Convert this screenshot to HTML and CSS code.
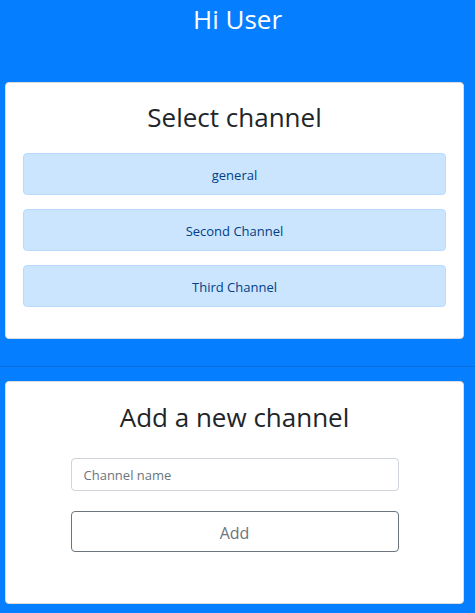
FILE: index.html
```html
<!DOCTYPE html>
<html>
<head>
<meta charset="utf-8">
<link rel="stylesheet" href="styles.css">
</head>
<body>
<header class="top">
  <h1 class="greeting">Hi User</h1>
</header>
<section class="card card-select">
  <h2 class="card-title">Select channel</h2>
  <div class="channel-list">
    <button class="channel">general</button>
    <button class="channel">Second Channel</button>
    <button class="channel">Third Channel</button>
  </div>
</section>
<hr class="divider">
<section class="card card-add">
  <h2 class="card-title">Add a new channel</h2>
  <form class="add-form">
    <input class="name-input" type="text" placeholder="Channel name">
    <button class="add-btn" type="button">Add</button>
  </form>
</section>
</body>
</html>
```

FILE: styles.css
```css
html, body {
  margin: 0;
  padding: 0;
}
body {
  background: #057fff;
  font-family: "Open Sans", "Noto Sans", sans-serif;
  color: #212529;
  height: 613px;
  overflow: hidden;
}
.top {
  height: 82px;
}
.greeting {
  margin: 0;
  text-align: center;
  color: #fff;
  font-weight: 400;
  font-size: 26px;
  line-height: 38px;
}
.card {
  background: #fff;
  border: 1px solid #dcdcdc;
  border-radius: 4px;
  margin: 0 11px 0 5px;
  box-sizing: border-box;
}
.card-select {
  height: 257px;
  padding: 0 17px;
}
.card-title {
  margin: 0;
  text-align: center;
  font-weight: 400;
  font-size: 26px;
  line-height: 36px;
}
.card-select .card-title {
  margin-top: 16px;
  margin-bottom: 18px;
}
.channel-list {
  display: flex;
  flex-direction: column;
  gap: 14px;
}
.channel {
  height: 42px;
  background: #cce5ff;
  border: 1px solid #b8daff;
  border-radius: 4px;
  color: #004085;
  font-family: inherit;
  font-size: 13px;
  padding: 2px 0 0 0;
}
.divider {
  margin: 27px 0 14px 0;
  border: 0;
  border-top: 1px solid #0a6fdc;
  height: 0;
}
.card-add {
  height: 223px;
}
.card-add .card-title {
  margin-top: 17px;
  margin-bottom: 23px;
}
.add-form {
  display: flex;
  flex-direction: column;
  align-items: center;
  gap: 20px;
}
.name-input {
  width: 328px;
  height: 33px;
  box-sizing: border-box;
  border: 1px solid #ced4da;
  border-radius: 4px;
  padding: 0 12px;
  font-family: inherit;
  font-size: 13px;
  color: #495057;
}
.name-input::placeholder {
  color: #6c757d;
}
.add-btn {
  width: 328px;
  height: 41px;
  box-sizing: border-box;
  background: #fff;
  border: 1px solid #6c757d;
  border-radius: 4px;
  color: #6c757d;
  font-family: inherit;
  font-size: 16px;
  padding: 2px 0 0 0;
}
```
